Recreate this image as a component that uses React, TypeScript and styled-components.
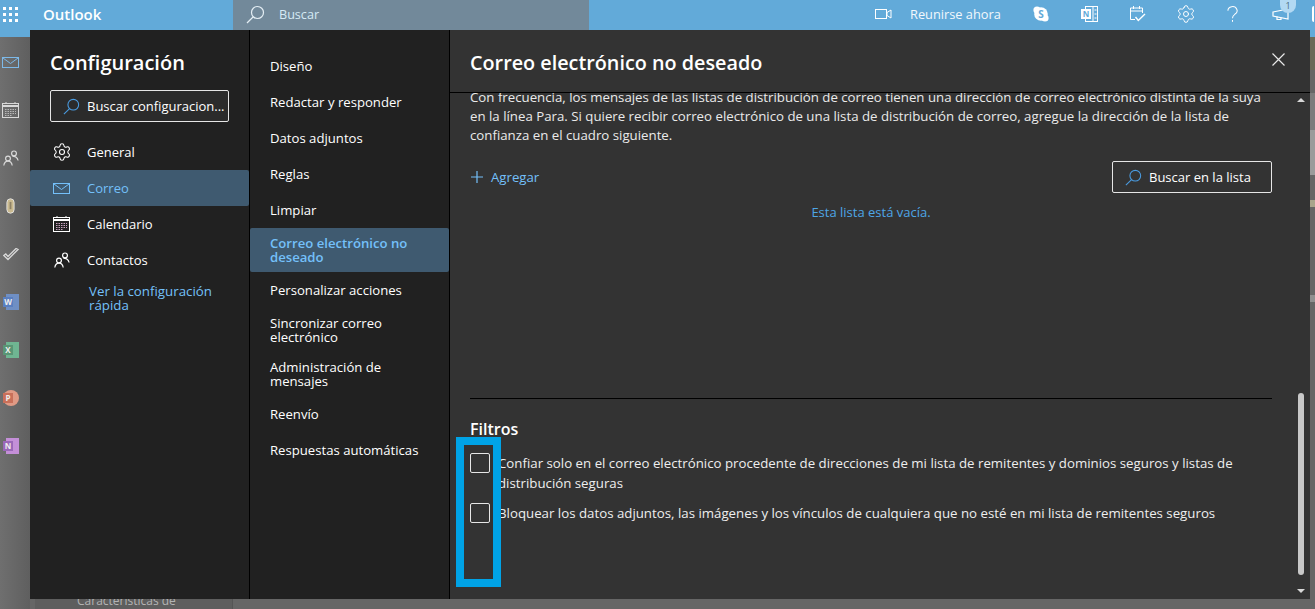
import React from "react";
import styled, { createGlobalStyle } from "styled-components";
import { Settings } from "lucide-react";

const GlobalStyle = createGlobalStyle`
  html, body {
    margin: 0;
    padding: 0;
    height: 100%;
    overflow: hidden;
    background: #666666;
    font-family: "Open Sans", "Liberation Sans", sans-serif;
  }
  #root {
    height: 100%;
  }
`;

const Page = styled.div`
  position: relative;
  width: 1315px;
  height: 609px;
  overflow: hidden;
  display: flex;
  flex-direction: column;
`;

const TopBar = styled.header`
  height: 37px;
  flex: none;
  display: flex;
  background: #62aad9;
  color: #fff;
`;

const Waffle = styled.div`
  width: 43px;
  height: 30px;
  display: flex;
  align-items: center;
  padding-left: 3px;
  box-sizing: border-box;
`;

const Brand = styled.div`
  width: 190px;
  height: 29px;
  line-height: 29px;
  font-size: 15px;
  font-weight: 600;
`;

const SearchBox = styled.div`
  width: 356px;
  height: 30px;
  display: flex;
  align-items: center;
  gap: 14px;
  padding: 0 0 1px 13px;
  box-sizing: border-box;
  background: #72899a;
  font-size: 12.6px;
  color: #d5eaf5;
`;

const BarActions = styled.div`
  flex: 1;
  height: 28px;
  display: flex;
  align-items: center;
  padding-left: 286px;
`;

const BarIcon = styled.div<{ $w: number }>`
  position: relative;
  flex: none;
  width: ${(p) => p.$w}px;
  height: 28px;
  display: flex;
  align-items: center;
`;

const MeetLabel = styled.span`
  flex: none;
  width: 123px;
  margin-top: -1px;
  font-size: 12.8px;
  color: #f2f8fc;
`;

const Badge = styled.span`
  position: absolute;
  left: 8px;
  top: -1px;
  width: 16px;
  height: 14px;
  border-radius: 0 0 8px 8px;
  background: #b2d9f3;
  color: #4a6a80;
  font-size: 9px;
  line-height: 13px;
  text-align: center;
`;

const AvatarEdge = styled.span`
  position: absolute;
  right: 0;
  top: 6px;
  width: 2px;
  height: 16px;
  border-radius: 2px 0 0 2px;
  background: #fff;
`;

const Body = styled.div`
  flex: 1;
  display: flex;
  min-height: 0;
`;

const Rail = styled.nav`
  width: 30px;
  flex: none;
  display: flex;
  flex-direction: column;
  align-items: center;
  gap: 24px;
  padding: 13px 9px 0 0;
  box-sizing: border-box;
  background: linear-gradient(90deg, #6f6f6f, #5f5f5f);
`;

const RailSlot = styled.div`
  height: 24px;
  display: flex;
  align-items: center;
  justify-content: center;
`;

const Behind = styled.div`
  flex: 1;
  display: flex;
  align-items: flex-end;
  background: #666666;
`;

const BehindList = styled.div`
  width: 197px;
  margin-left: 5px;
  height: 100%;
  background: #5e5e5e;
  border-right: 1px solid #555;
  overflow: hidden;
  display: flex;
  flex-direction: column;
  justify-content: flex-end;
`;

const BehindText = styled.div`
  margin: 0 0 1px 42px;
  font-size: 12px;
  line-height: 14px;
  color: #b3b3b3;
`;

const RightEdge = styled.div`
  margin-left: auto;
  width: 5px;
  height: 100%;
  display: flex;
  flex-direction: column;
`;

const EdgeBlock = styled.div<{ $h: number; $c: string }>`
  height: ${(p) => p.$h}px;
  flex: none;
  background: ${(p) => p.$c};
`;

const Modal = styled.section`
  position: absolute;
  left: 30px;
  top: 30px;
  width: 1280px;
  height: 569px;
  display: flex;
  color: #fff;
`;

const SideCol = styled.div`
  width: 220px;
  flex: none;
  box-sizing: border-box;
  background: #212121;
  border-right: 1px solid #000;
`;

const SideTitle = styled.h1`
  margin: 0;
  padding: 20px 0 0 20px;
  font-size: 20px;
  line-height: 26px;
  font-weight: 600;
`;

const SideSearch = styled.div`
  margin: 14px 0 12px 20px;
  width: 179px;
  height: 32px;
  box-sizing: border-box;
  display: flex;
  align-items: center;
  gap: 7px;
  padding-left: 12px;
  border: 1px solid #e6e6e6;
  border-radius: 2px;
  background: #2b2b2b;
  font-size: 13px;
  white-space: nowrap;
  overflow: hidden;
`;

const SideItem = styled.div<{ $active?: boolean }>`
  height: 36px;
  display: flex;
  align-items: center;
  font-size: 13px;
  border-radius: 2px;
  padding-right: 1px;
  background: ${(p) => (p.$active ? "#3f5a70" : "transparent")};
  color: ${(p) => (p.$active ? "#74c0fa" : "#fff")};
`;

const SideIcon = styled.span`
  width: 57px;
  flex: none;
  display: flex;
  justify-content: center;
  padding-left: 6px;
  box-sizing: border-box;
`;

const QuickLink = styled.div`
  margin: 6px 0 0 59px;
  width: 140px;
  font-size: 13.3px;
  line-height: 14px;
  color: #74c0fa;
`;

const MidCol = styled.div`
  width: 200px;
  flex: none;
  padding-top: 18px;
  box-sizing: border-box;
  background: #212121;
  border-right: 1px solid #000;
`;

const MidItem = styled.div<{ $active?: boolean; $tall?: boolean }>`
  box-sizing: border-box;
  display: flex;
  align-items: center;
  padding: 4px 20px;
  font-size: 13.15px;
  line-height: 14px;
  border-radius: 2px;
  font-weight: ${(p) => (p.$active ? 600 : 400)};
  background: ${(p) => (p.$active ? "#3f5a70" : "transparent")};
  color: ${(p) => (p.$active ? "#74c0fa" : "#fff")};
  min-height: ${(p) => (p.$tall ? 44 : 36)}px;
`;

const MainCol = styled.div`
  flex: 1;
  min-width: 0;
  display: flex;
  flex-direction: column;
  background: #333333;
`;

const MainHeader = styled.div`
  height: 63px;
  flex: none;
  box-sizing: border-box;
  display: flex;
  align-items: center;
  justify-content: space-between;
  padding: 2px 25px 0 20px;
  border-bottom: 1px solid #000;
`;

const MainTitle = styled.h2`
  margin: 0;
  font-size: 19.8px;
  font-weight: 600;
`;

const CloseGlyph = styled.svg`
  margin-top: -5px;
`;

const Scroller = styled.div`
  position: relative;
  flex: 1;
  min-height: 0;
  overflow: hidden;
  padding: 0 38px 0 20px;
`;

const Paragraph = styled.p`
  margin: -5px 0 0;
  font-size: 13.25px;
  line-height: 19px;
  color: #eaeaea;
`;

const ListTools = styled.div`
  margin-top: 16px;
  display: flex;
  align-items: center;
  justify-content: space-between;
`;

const AddLink = styled.div`
  display: flex;
  align-items: center;
  gap: 7px;
  font-size: 13.2px;
  color: #74c0fa;
`;

const FindButton = styled.div`
  width: 160px;
  height: 32px;
  box-sizing: border-box;
  display: flex;
  align-items: center;
  gap: 7px;
  padding-left: 12px;
  border: 1px solid #e6e6e6;
  border-radius: 2px;
  font-size: 13px;
`;

const EmptyNote = styled.div`
  margin-top: 10px;
  text-align: center;
  font-size: 13px;
  line-height: 18px;
  color: #4ea6e6;
`;

const Divider = styled.hr`
  margin: 177px 0 0;
  border: 0;
  border-top: 1px solid #000;
`;

const SectionTitle = styled.h3`
  margin: 20px 0 0;
  font-size: 16px;
  line-height: 20px;
  font-weight: 600;
`;

const CheckRow = styled.label<{ $first?: boolean }>`
  display: flex;
  align-items: flex-start;
  margin-top: ${(p) => (p.$first ? 14 : 10)}px;
  font-size: 13.28px;
  line-height: 20px;
  color: #eeeeee;
`;

const CheckBox = styled.span`
  flex: none;
  width: 20px;
  height: 20px;
  margin-right: 8px;
  box-sizing: border-box;
  border: 1px solid #e6e6e6;
  border-radius: 2px;
`;

const ScrollTrack = styled.div`
  position: absolute;
  top: 0;
  right: 6px;
  bottom: 0;
  width: 6px;
`;

const ScrollThumb = styled.div`
  position: absolute;
  left: 0;
  top: 300px;
  width: 6px;
  height: 182px;
  border-radius: 3px;
  background: #c8c8c8;
`;

const ArrowUp = styled.div`
  position: absolute;
  top: 5px;
  left: -1px;
  border: 4px solid transparent;
  border-top: 0;
  border-bottom: 4px solid #d8d8d8;
`;

const ArrowDown = styled.div`
  position: absolute;
  bottom: 6px;
  left: -1px;
  border: 4px solid transparent;
  border-bottom: 0;
  border-top: 4px solid #d8d8d8;
`;

const Callout = styled.div`
  position: absolute;
  left: 456px;
  top: 437px;
  width: 45px;
  height: 150px;
  box-sizing: border-box;
  border: 8px solid #00a3e6;
  pointer-events: none;
`;

const Lens = ({ color, size = 19 }: { color: string; size?: number }) => (
  <svg width={size} height={size} viewBox="0 0 19 19" fill="none" stroke={color} strokeWidth="1.2">
    <circle cx="11.5" cy="7.5" r="6" />
    <path d="M7.3 11.8 1 18" />
  </svg>
);

const MailGlyph = ({ color }: { color: string }) => (
  <svg width="17" height="11" viewBox="0 0 17 11" fill="none" stroke={color} strokeWidth="1">
    <rect x="0.5" y="0.5" width="16" height="10" />
    <path d="M1 1l7.5 5.5L16 1" />
  </svg>
);

const CalGlyph = ({ color, dots }: { color: string; dots: string }) => (
  <svg width="17" height="16" viewBox="0 0 17 16" fill="none" stroke={color} strokeWidth="1">
    <rect x="0.5" y="1.5" width="16" height="14" />
    <path d="M1 4h15" strokeWidth="2" />
    <path d="M4 0v2M13 0v2" />
    <path d="M3 7.5h11M3 9.5h11M3 11.5h11M3 13.5h7" stroke={dots} strokeDasharray="1.5 1" />
  </svg>
);

const PeopleGlyph = ({ color }: { color: string }) => (
  <svg width="16" height="16" viewBox="0 0 16 16" fill="none" stroke={color} strokeWidth="1.2">
    <circle cx="5" cy="8.5" r="2.4" />
    <path d="M0.8 15.5c.4-2.8 2-4.3 4.2-4.3s3.8 1.5 4.2 4.3" />
    <circle cx="11" cy="3.4" r="2.4" />
    <path d="M9.5 6.5c2.8-.6 5 1 5.6 4" />
  </svg>
);

const ClipGlyph = () => (
  <svg width="9" height="16" viewBox="0 0 10 17" fill="#c9b98f" stroke="#e8e8e8" strokeWidth="1">
    <path d="M1 4.5a4 4 0 0 1 8 0v8a4 4 0 0 1-8 0z" />
    <path d="M4 4v8h2V4z" fill="#8f8266" stroke="none" />
  </svg>
);

const CheckGlyph = () => (
  <svg width="16" height="13" viewBox="0 0 16 13" fill="none" stroke="#d9d9d9" strokeWidth="1.3">
    <path d="M0.8 7.5 5 11.5l10-10-2-1L5 8.5 2.8 6z" />
  </svg>
);

const OfficeGlyph = ({ back, front, letter, round }: { back: string; front: string; letter: string; round?: boolean }) => (
  <svg width="16" height="16" viewBox="0 0 16 16">
    {round ? <circle cx="8" cy="8" r="8" fill={back} /> : <rect x="3" width="13" height="16" fill={back} />}
    <rect y="3" width="10" height="10" fill={front} />
    <text x="5" y="11" textAnchor="middle" fontSize="8" fontWeight="700" fill="#eee" fontFamily="Open Sans">
      {letter}
    </text>
  </svg>
);

const SkypeGlyph = () => (
  <svg width="16" height="16" viewBox="0 0 16 16">
    <circle cx="8" cy="8" r="6.8" fill="#fff" />
    <circle cx="4" cy="4" r="3.6" fill="#fff" />
    <circle cx="12" cy="12" r="3.6" fill="#fff" />
    <text x="8" y="11.6" textAnchor="middle" fontSize="10" fontWeight="700" fill="#62aad9" fontFamily="Open Sans">
      S
    </text>
  </svg>
);

const NotesGlyph = () => (
  <svg width="17" height="16" viewBox="0 0 17 16">
    <rect x="4.5" y="0.5" width="12" height="15" fill="none" stroke="#fff" />
    <path d="M12 1v14" stroke="#fff" />
    <path d="M13.5 4h2M13.5 8h2M13.5 12h2" stroke="#fff" />
    <rect y="3" width="10" height="10" fill="#fff" />
    <text x="5" y="11" textAnchor="middle" fontSize="8" fontWeight="700" fill="#62aad9" fontFamily="Open Sans">
      N
    </text>
  </svg>
);

const PlanGlyph = () => (
  <svg width="17" height="16" viewBox="0 0 17 16" fill="none" stroke="#fff">
    <path d="M6 13.5H1.5V2h12v5" />
    <path d="M1.5 5h12M4.5 0v3M10.5 0v3" />
    <path d="M6.5 11l2.8 3.5L16 8" strokeWidth="1.4" />
  </svg>
);

const HornGlyph = () => (
  <svg width="18" height="14" viewBox="0 0 18 14" fill="none" stroke="#fff" strokeWidth="1.2">
    <path d="M1 5l15-3v10L1 9z" />
    <path d="M5 9.5v3h4v-2" />
  </svg>
);

const VideoGlyph = () => (
  <svg width="17" height="10" viewBox="0 0 17 10" fill="none" stroke="#fff">
    <rect x="0.5" y="0.5" width="11" height="9" />
    <path d="M12 3.5l4-2.5v8l-4-2.5z" />
  </svg>
);

const WaffleGlyph = () => (
  <svg width="16" height="16" viewBox="0 0 16 16" fill="#fff">
    {[0, 6, 12].flatMap((y) =>
      [0, 6, 12].map((x) => <rect key={`${x}-${y}`} x={x} y={y} width="3" height="3" />)
    )}
  </svg>
);

const midItems = [
  { label: "Diseño" },
  { label: "Redactar y responder" },
  { label: "Datos adjuntos" },
  { label: "Reglas" },
  { label: "Limpiar" },
  { label: "Correo electrónico no deseado", active: true, tall: true },
  { label: "Personalizar acciones" },
  { label: "Sincronizar correo electrónico", tall: true },
  { label: "Administración de mensajes", tall: true },
  { label: "Reenvío" },
  { label: "Respuestas automáticas" },
];

const edgeBlocks = [
  { h: 33, c: "#6b6a58" },
  { h: 23, c: "#666666" },
  { h: 37, c: "#7c7c7c" },
  { h: 45, c: "#9b9b9b" },
  { h: 25, c: "#666666" },
  { h: 7, c: "#a8a58c" },
  { h: 88, c: "#666666" },
  { h: 7, c: "#8f8f8f" },
];

const App = () => (
  <Page>
    <GlobalStyle />
    <TopBar>
      <Waffle>
        <WaffleGlyph />
      </Waffle>
      <Brand>Outlook</Brand>
      <SearchBox>
        <Lens color="#e4eef4" />
        Buscar
      </SearchBox>
      <BarActions>
        <BarIcon $w={35}>
          <VideoGlyph />
        </BarIcon>
        <MeetLabel>Reunirse ahora</MeetLabel>
        <BarIcon $w={48}>
          <SkypeGlyph />
        </BarIcon>
        <BarIcon $w={48}>
          <NotesGlyph />
        </BarIcon>
        <BarIcon $w={47}>
          <PlanGlyph />
        </BarIcon>
        <BarIcon $w={51}>
          <Settings size={20} strokeWidth={1.2} />
        </BarIcon>
        <BarIcon $w={45}>
          <svg width="11" height="17" viewBox="0 0 12 18" fill="none" stroke="#fff" strokeWidth="1.1">
            <path d="M1 5a5 4.5 0 1 1 7.5 3.8C6.8 10 6 11 6 13" />
            <path d="M6 15v2" />
          </svg>
        </BarIcon>
        <BarIcon $w={42}>
          <HornGlyph />
          <Badge>1</Badge>
          <AvatarEdge />
        </BarIcon>
      </BarActions>
    </TopBar>
    <Body>
      <Rail>
        <RailSlot>
          <MailGlyph color="#7db9e8" />
        </RailSlot>
        <RailSlot>
          <CalGlyph color="#d9d9d9" dots="#b8b8b8" />
        </RailSlot>
        <RailSlot>
          <PeopleGlyph color="#d9d9d9" />
        </RailSlot>
        <RailSlot>
          <ClipGlyph />
        </RailSlot>
        <RailSlot>
          <CheckGlyph />
        </RailSlot>
        <RailSlot>
          <OfficeGlyph back="#6f8fc4" front="#5a7fc0" letter="W" />
        </RailSlot>
        <RailSlot>
          <OfficeGlyph back="#6fb592" front="#5a9575" letter="X" />
        </RailSlot>
        <RailSlot>
          <OfficeGlyph back="#e09a85" front="#c9705a" letter="P" round />
        </RailSlot>
        <RailSlot>
          <OfficeGlyph back="#c48fd8" front="#9a68b8" letter="N" />
        </RailSlot>
      </Rail>
      <Behind>
        <BehindList>
          <BehindText>Características de</BehindText>
        </BehindList>
        <RightEdge>
          {edgeBlocks.map((block, i) => (
            <EdgeBlock key={i} $h={block.h} $c={block.c} />
          ))}
        </RightEdge>
      </Behind>
    </Body>
    <Modal>
      <SideCol>
        <SideTitle>Configuración</SideTitle>
        <SideSearch>
          <Lens color="#4a9be0" size={17} />
          Buscar configuracion...
        </SideSearch>
        <SideItem>
          <SideIcon>
            <Settings size={20} strokeWidth={1.3} />
          </SideIcon>
          General
        </SideItem>
        <SideItem $active>
          <SideIcon>
            <MailGlyph color="#74c0fa" />
          </SideIcon>
          Correo
        </SideItem>
        <SideItem>
          <SideIcon>
            <CalGlyph color="#fff" dots="#c9a0c0" />
          </SideIcon>
          Calendario
        </SideItem>
        <SideItem>
          <SideIcon>
            <PeopleGlyph color="#fff" />
          </SideIcon>
          Contactos
        </SideItem>
        <QuickLink>Ver la configuración rápida</QuickLink>
      </SideCol>
      <MidCol>
        {midItems.map((item) => (
          <MidItem key={item.label} $active={item.active} $tall={item.tall}>
            {item.label}
          </MidItem>
        ))}
      </MidCol>
      <MainCol>
        <MainHeader>
          <MainTitle>Correo electrónico no deseado</MainTitle>
          <CloseGlyph width="13" height="13" viewBox="0 0 13 13" stroke="#e8e8e8" strokeWidth="1.2">
            <path d="M.5.5l12 12M12.5.5l-12 12" />
          </CloseGlyph>
        </MainHeader>
        <Scroller>
          <Paragraph>
            Con frecuencia, los mensajes de las listas de distribución de correo tienen una dirección de correo
            electrónico distinta de la suya en la línea Para. Si quiere recibir correo electrónico de una lista de
            distribución de correo, agregue la dirección de la lista de confianza en el cuadro siguiente.
          </Paragraph>
          <ListTools>
            <AddLink>
              <svg width="14" height="14" viewBox="0 0 14 14" stroke="#74c0fa" strokeWidth="1.2">
                <path d="M7 1v12M1 7h12" />
              </svg>
              Agregar
            </AddLink>
            <FindButton>
              <Lens color="#4a9be0" size={17} />
              Buscar en la lista
            </FindButton>
          </ListTools>
          <EmptyNote>Esta lista está vacía.</EmptyNote>
          <Divider />
          <SectionTitle>Filtros</SectionTitle>
          <CheckRow $first>
            <CheckBox />
            <span>
              Confiar solo en el correo electrónico procedente de direcciones de mi lista de remitentes y dominios
              seguros y listas de distribución seguras
            </span>
          </CheckRow>
          <CheckRow>
            <CheckBox />
            <span>
              Bloquear los datos adjuntos, las imágenes y los vínculos de cualquiera que no esté en mi lista de
              remitentes seguros
            </span>
          </CheckRow>
          <ScrollTrack>
            <ArrowUp />
            <ScrollThumb />
            <ArrowDown />
          </ScrollTrack>
        </Scroller>
      </MainCol>
    </Modal>
    <Callout />
  </Page>
);

export default App;
